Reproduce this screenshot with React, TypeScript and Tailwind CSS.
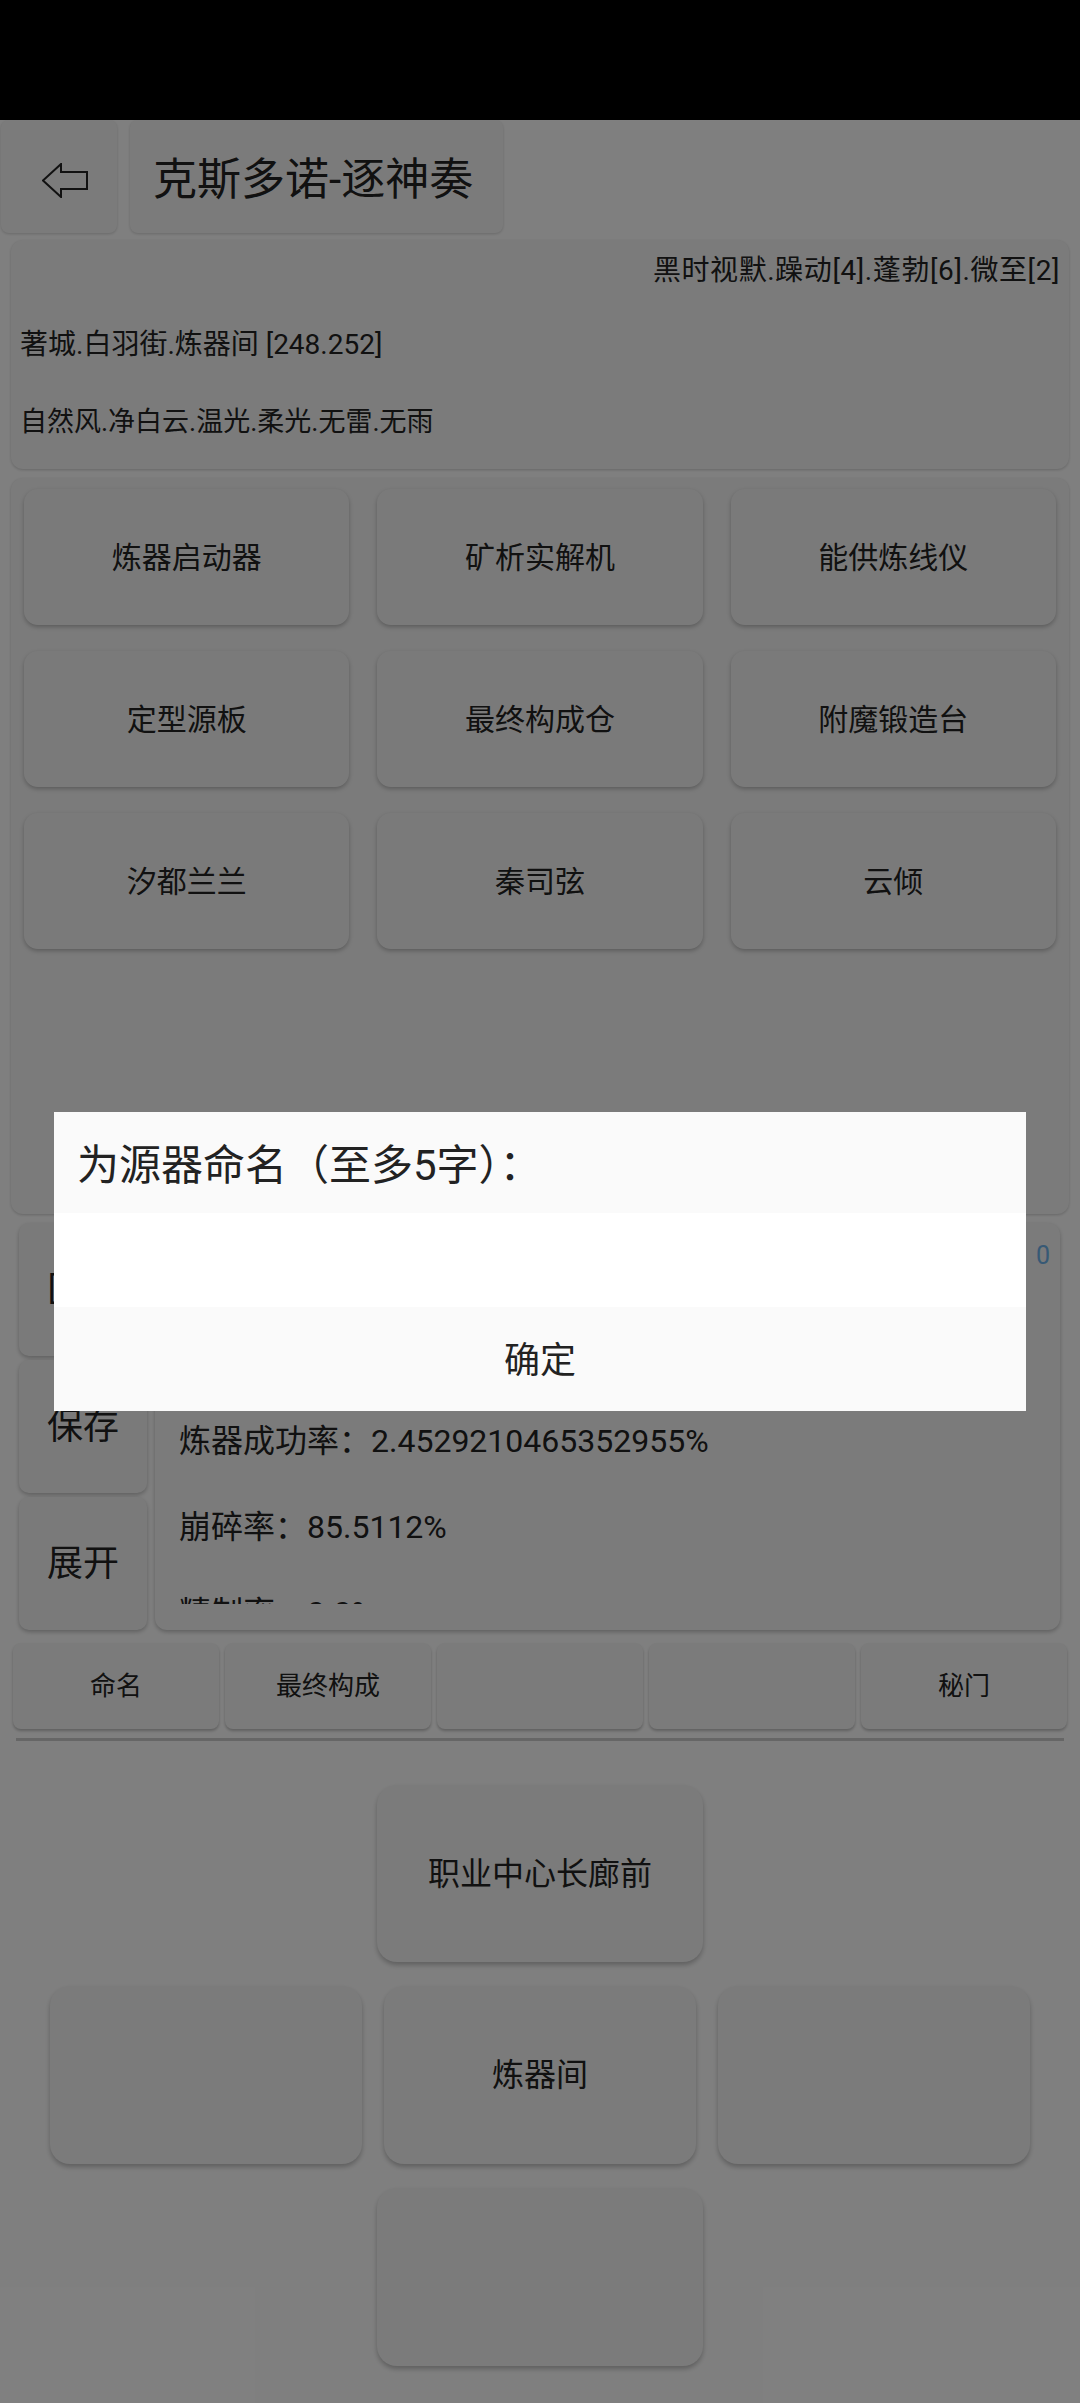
import React from 'react';

const FONT = "font-['Roboto','Noto_Sans_CJK_SC',sans-serif]";

const gridItems = ['炼器启动器', '矿析实解机', '能供炼线仪', '定型源板', '最终构成仓', '附魔锻造台', '汐都兰兰', '秦司弦', '云倾'];
const tabs = ['命名', '最终构成', '', '', '秘门'];
const stats = ['名称：未命名', '构成：定型源板', '炼器成功率：2.4529210465352955%', '崩碎率：85.5112%', '精制率：0.0%'];

function BackArrow() {
  return (
    <svg width="46" height="35" viewBox="0 0 46 35" fill="none">
      <polygon
        points="1,17.5 19,1 19,9 45,9 45,26 19,26 19,34"
        stroke="#222"
        strokeWidth="2"
        strokeLinejoin="miter"
      />
    </svg>
  );
}

export default function App() {
  return (
    <div className={`relative w-[1080px] h-[2403px] overflow-hidden bg-white text-[#222] ${FONT}`}>
      {/* status bar */}
      <div className="h-[120px] bg-black" />

      {/* header */}
      <div className="flex h-[113px] gap-[13px] pl-[1px]">
        <div className="flex w-[116px] items-center rounded-[8px] bg-[#f7f7f7] pl-[41px] pt-[7px] shadow-[0_1px_3px_rgba(0,0,0,0.18)]">
          <BackArrow />
        </div>
        <div className="flex w-[373px] items-center rounded-[8px] bg-[#f7f7f7] pl-[23px] pt-[7px] text-[44px] shadow-[0_1px_3px_rgba(0,0,0,0.18)]">
          克斯多诺-逐神奏
        </div>
      </div>

      {/* info card */}
      <div className="mx-[11px] mt-[7px] flex h-[229px] flex-col rounded-[12px] bg-[#f6f6f6] px-[9px] text-[27px] shadow-[0_1px_3px_rgba(0,0,0,0.2)]">
        <div className="h-[76px] pt-[10px] text-right text-[28px] leading-[42px] tracking-[0.6px]">黑时视默.躁动[4].蓬勃[6].微至[2]</div>
        <div className="h-[76px] pt-[8px] text-[28px] leading-[42px]">著城.白羽街.炼器间 [248.252]</div>
        <div className="h-[76px] pt-[9px] leading-[42px]">自然风.净白云.温光.柔光.无雷.无雨</div>
      </div>

      {/* device grid */}
      <div className="mx-[11px] mt-[9px] h-[736px] rounded-[12px] bg-[#f6f6f6] px-[13px] pt-[11px] shadow-[0_1px_3px_rgba(0,0,0,0.2)]">
        <div className="grid grid-cols-3 gap-x-[28px] gap-y-[26px]">
          {gridItems.map((t) => (
            <div
              key={t}
              className="flex h-[136px] items-center justify-center rounded-[14px] bg-[#f5f5f5] text-[30px] shadow-[0_2px_4px_rgba(0,0,0,0.25)]"
            >
              {t}
            </div>
          ))}
        </div>
      </div>

      {/* detail panel */}
      <div className="mt-[9px] flex gap-[8px] pl-[19px] pr-[20px]">
        <div className="flex w-[128px] flex-col gap-[4px]">
          {['匠心', '保存', '展开'].map((t) => (
            <div
              key={t}
              className="flex h-[133px] items-center justify-center rounded-[10px] bg-[#f5f5f5] text-[36px] shadow-[0_2px_4px_rgba(0,0,0,0.25)]"
            >
              {t}
            </div>
          ))}
        </div>
        <div className="relative h-[407px] flex-1 rounded-[12px] bg-[#f6f6f6] pb-[24px] pl-[24px] shadow-[0_2px_4px_rgba(0,0,0,0.25)]">
          <div className="absolute right-[10px] top-[20px] text-[25px] leading-none text-[#6fb3ea]">熔炼次数：0</div>
          <div className="h-[381px] overflow-hidden pt-[3px]">
            {stats.map((s) => (
              <div key={s} className="flex h-[86px] items-center text-[32px]">
                {s}
              </div>
            ))}
          </div>
        </div>
      </div>

      {/* tabs */}
      <div className="mt-[13px] grid grid-cols-5 gap-[6px] px-[13px]">
        {tabs.map((t, i) => (
          <div
            key={i}
            className="flex h-[86px] items-center justify-center rounded-[8px] bg-[#f6f6f6] text-[26px] shadow-[0_2px_3px_rgba(0,0,0,0.25)]"
          >
            {t}
          </div>
        ))}
      </div>
      <div className="mx-[16px] mt-[9px] h-[3px] bg-[#cdcdcd]" />

      {/* navigation cross */}
      <div className="mt-[44px] flex flex-col items-center gap-[24px]">
        <div className="flex h-[177px] w-[326px] items-center justify-center rounded-[20px] bg-[#f6f6f6] text-[32px] shadow-[0_3px_5px_rgba(0,0,0,0.25)]">
          职业中心长廊前
        </div>
        <div className="flex gap-[22px]">
          <div className="h-[178px] w-[312px] rounded-[20px] bg-[#f6f6f6] shadow-[0_3px_5px_rgba(0,0,0,0.25)]" />
          <div className="flex h-[178px] w-[312px] items-center justify-center rounded-[20px] bg-[#f6f6f6] text-[32px] shadow-[0_3px_5px_rgba(0,0,0,0.25)]">
            炼器间
          </div>
          <div className="h-[178px] w-[312px] rounded-[20px] bg-[#f6f6f6] shadow-[0_3px_5px_rgba(0,0,0,0.25)]" />
        </div>
        <div className="h-[178px] w-[326px] rounded-[20px] bg-[#f6f6f6] shadow-[0_3px_5px_rgba(0,0,0,0.25)]" />
      </div>

      {/* dim overlay */}
      <div className="absolute inset-0 bg-black/50" />

      {/* name dialog */}
      <div className="absolute left-[54px] top-[1112px] w-[972px]">
        <div className="flex h-[101px] items-center bg-[#fafafa] pl-[23px] pt-[5px] text-[42px]">为源器命名（至多5字）：</div>
        <div className="h-[94px] bg-white" />
        <div className="flex h-[104px] items-center justify-center bg-[#fafafa] pt-[3px] text-[36px]">确定</div>
      </div>
    </div>
  );
}
